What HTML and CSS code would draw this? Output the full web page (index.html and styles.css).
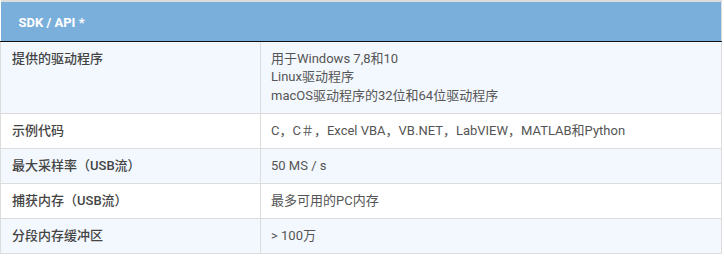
FILE: index.html
```html
<!DOCTYPE html>
<html lang="zh">
<head>
<meta charset="utf-8">
<link rel="stylesheet" href="styles.css">
</head>
<body>
<table class="spec">
  <colgroup>
    <col class="c1">
    <col class="c2">
  </colgroup>
  <thead>
    <tr><th colspan="2" class="head">SDK / API *</th></tr>
  </thead>
  <tbody>
    <tr class="alt tall">
      <td class="key">提供的驱动程序</td>
      <td class="val">用于Windows 7,8和10<br>Linux驱动程序<br>macOS驱动程序的32位和64位驱动程序</td>
    </tr>
    <tr>
      <td class="key">示例代码</td>
      <td class="val">C，C＃，Excel VBA，VB.NET，LabVIEW，MATLAB和Python</td>
    </tr>
    <tr class="alt">
      <td class="key">最大采样率（USB流）</td>
      <td class="val">50 MS / s</td>
    </tr>
    <tr>
      <td class="key">捕获内存（USB流）</td>
      <td class="val">最多可用的PC内存</td>
    </tr>
    <tr class="alt">
      <td class="key">分段内存缓冲区</td>
      <td class="val">&gt; 100万</td>
    </tr>
  </tbody>
</table>
</body>
</html>
```

FILE: styles.css
```css
html, body {
  margin: 0;
  padding: 0;
  background: #ffffff;
}
body {
  font-family: Roboto, "Noto Sans CJK SC", sans-serif;
  font-size: 13px;
}
.spec {
  width: 722px;
  border-collapse: collapse;
  border-top: 2px solid #dcdcdc;
  table-layout: fixed;
}
.c1 {
  width: 260px;
}
.head {
  background: #7bafdb;
  color: #ffffff;
  font-weight: 700;
  text-align: left;
  height: 40px;
  padding: 2px 0 0 18px;
  border-bottom: 1px solid #111;
  border-right: 1px solid #dcdcdc;
  box-sizing: border-box;
}
.spec td {
  border: 1px solid #dcdcdc;
  height: 34px;
  padding: 0 10px;
  line-height: 18px;
  vertical-align: middle;
}
.spec tr.tall td {
  height: 63px;
  vertical-align: top;
  padding-top: 8px;
  padding-bottom: 0;
  line-height: 18.5px;
}
.spec tr.alt td {
  background: #f3f8fe;
}
.key {
  color: #444;
  font-weight: 500;
  font-size: 13px;
  padding-left: 11px !important;
}
.val {
  color: #555;
}
```
